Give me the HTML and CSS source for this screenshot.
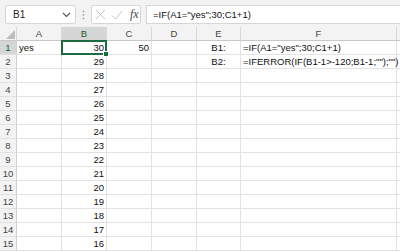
FILE: index.html
```html
<!DOCTYPE html>
<html lang="en">
<head>
    <meta charset="UTF-8">
    <title>Sheet</title>
    <link rel="stylesheet" href="styles.css">
</head>
<body>
    <div class="toolbar">
        <div class="namebox">
            <span>B1</span>
            <svg class="chev" width="9" height="6" viewBox="0 0 9 6"><path d="M1 1 L4.5 4.5 L8 1" fill="none" stroke="#555" stroke-width="1.1"/></svg>
        </div>
        <div class="grip">
            <svg width="3" height="10" viewBox="0 0 3 10"><circle cx="1.5" cy="1.5" r="0.8" fill="#888"/><circle cx="1.5" cy="5" r="0.8" fill="#888"/><circle cx="1.5" cy="8.5" r="0.8" fill="#888"/></svg>
        </div>
        <div class="fxbox">
            <svg width="11" height="11" viewBox="0 0 11 11"><path d="M1 1 L10 10 M10 1 L1 10" stroke="#c4c4c4" stroke-width="1"/></svg>
            <svg width="12" height="10" viewBox="0 0 12 10"><path d="M1 5.5 L4.5 9 L11 1" fill="none" stroke="#c4c4c4" stroke-width="1"/></svg>
            <span class="fx">fx</span>
        </div>
        <div class="formula">=IF(A1="yes";30;C1+1)</div>
    </div>

    <div class="sheet">
        <div class="hd corner"><svg width="9" height="9" viewBox="0 0 9 9"><polygon points="9,0 9,9 0,9" fill="#bdbdbd"/></svg></div>
        <div class="hd">A</div>
        <div class="hd on">B</div>
        <div class="hd">C</div>
        <div class="hd">D</div>
        <div class="hd">E</div>
        <div class="hd">F</div>
        <div class="hd"></div>

        <div class="rh on">1</div><div class="c">yes</div><div class="c num sel">30<span class="cursor"></span></div><div class="c num">50</div><div class="c"></div><div class="c ctr">B1:</div><div class="c">=IF(A1="yes";30;C1+1)</div><div class="c"></div>
        <div class="rh">2</div><div class="c"></div><div class="c num">29</div><div class="c"></div><div class="c"></div><div class="c ctr">B2:</div><div class="c">=IFERROR(IF(B1-1&gt;-120;B1-1;"");"")</div><div class="c"></div>
        <div class="rh">3</div><div class="c"></div><div class="c num">28</div><div class="c"></div><div class="c"></div><div class="c"></div><div class="c"></div><div class="c"></div>
        <div class="rh">4</div><div class="c"></div><div class="c num">27</div><div class="c"></div><div class="c"></div><div class="c"></div><div class="c"></div><div class="c"></div>
        <div class="rh">5</div><div class="c"></div><div class="c num">26</div><div class="c"></div><div class="c"></div><div class="c"></div><div class="c"></div><div class="c"></div>
        <div class="rh">6</div><div class="c"></div><div class="c num">25</div><div class="c"></div><div class="c"></div><div class="c"></div><div class="c"></div><div class="c"></div>
        <div class="rh">7</div><div class="c"></div><div class="c num">24</div><div class="c"></div><div class="c"></div><div class="c"></div><div class="c"></div><div class="c"></div>
        <div class="rh">8</div><div class="c"></div><div class="c num">23</div><div class="c"></div><div class="c"></div><div class="c"></div><div class="c"></div><div class="c"></div>
        <div class="rh">9</div><div class="c"></div><div class="c num">22</div><div class="c"></div><div class="c"></div><div class="c"></div><div class="c"></div><div class="c"></div>
        <div class="rh">10</div><div class="c"></div><div class="c num">21</div><div class="c"></div><div class="c"></div><div class="c"></div><div class="c"></div><div class="c"></div>
        <div class="rh">11</div><div class="c"></div><div class="c num">20</div><div class="c"></div><div class="c"></div><div class="c"></div><div class="c"></div><div class="c"></div>
        <div class="rh">12</div><div class="c"></div><div class="c num">19</div><div class="c"></div><div class="c"></div><div class="c"></div><div class="c"></div><div class="c"></div>
        <div class="rh">13</div><div class="c"></div><div class="c num">18</div><div class="c"></div><div class="c"></div><div class="c"></div><div class="c"></div><div class="c"></div>
        <div class="rh">14</div><div class="c"></div><div class="c num">17</div><div class="c"></div><div class="c"></div><div class="c"></div><div class="c"></div><div class="c"></div>
        <div class="rh">15</div><div class="c"></div><div class="c num">16</div><div class="c"></div><div class="c"></div><div class="c"></div><div class="c"></div><div class="c"></div>
    </div>
</body>
</html>
```

FILE: styles.css
```css
body {
    margin: 0;
    padding: 0;
    background-color: #fff;
    font-family: "Liberation Sans", Arial, sans-serif;
    overflow: hidden;
    width: 400px;
    height: 252px;
}

/* formula bar */
.toolbar {
    height: 27px;
    background-color: #f3f3f3;
    display: flex;
    align-items: flex-start;
    padding-top: 5px;
    box-sizing: border-box;
}
.namebox {
    margin-left: 5px;
    width: 71px;
    height: 19px;
    box-sizing: border-box;
    background: #fff;
    border: 1px solid #d6d6d6;
    border-radius: 2px;
    display: flex;
    align-items: center;
    justify-content: space-between;
    padding: 0 4px 0 7px;
    font-size: 10px;
    color: #222;
}
.grip {
    width: 15px;
    height: 19px;
    display: flex;
    align-items: center;
    justify-content: center;
}
.fxbox {
    width: 50px;
    height: 19px;
    box-sizing: border-box;
    background: #fff;
    border: 1px solid #d6d6d6;
    border-radius: 2px;
    display: flex;
    align-items: center;
    gap: 5px;
    padding-left: 3px;
}
.fx {
    font-family: "Liberation Serif", "Times New Roman", serif;
    font-style: italic;
    font-size: 12px;
    color: #444;
    margin-left: 2px;
}
.formula {
    margin-left: 5px;
    flex: 1;
    height: 19px;
    box-sizing: border-box;
    background: #fff;
    border: 1px solid #d6d6d6;
    border-right: none;
    padding-left: 6px;
    font-size: 9.5px;
    line-height: 17px;
    color: #111;
}

/* grid */
.sheet {
    display: grid;
    grid-template-columns: 17px 45px 45px 45px 45px 44px 156px 1fr;
    grid-auto-rows: 14px;
    font-size: 9.5px;
}
.sheet > div {
    box-sizing: border-box;
    border-right: 1px solid #e2e2e2;
    border-bottom: 1px solid #e2e2e2;
    line-height: 13px;
    white-space: nowrap;
    overflow: visible;
}
.hd {
    background: #f3f3f3;
    text-align: center;
    color: #444;
    border-right-color: #d8d8d8 !important;
    border-bottom-color: #c8c8c8 !important;
}
.hd.on {
    background: #d6d6d6;
    color: #185c37;
}
.corner {
    display: flex;
    align-items: flex-end;
    justify-content: flex-end;
    padding: 0 1px 1px 0;
}
.rh {
    background: #f3f3f3;
    text-align: center;
    color: #444;
    border-right-color: #d0d0d0 !important;
}
.rh.on {
    background: #d6d6d6;
    color: #185c37;
}
.c {
    padding: 0 2px;
    color: #111;
}
.num {
    text-align: right;
}
.ctr {
    text-align: center;
}
.sel {
    position: relative;
}
.sel::before {
    content: "";
    position: absolute;
    top: -1px;
    left: -1px;
    right: -1px;
    bottom: -1px;
    border: 2px solid #1d6b41;
}
.cursor {
    position: absolute;
    right: -3px;
    bottom: -3px;
    width: 4px;
    height: 4px;
    background: #1d6b41;
    border: 1px solid #fff;
}
```
